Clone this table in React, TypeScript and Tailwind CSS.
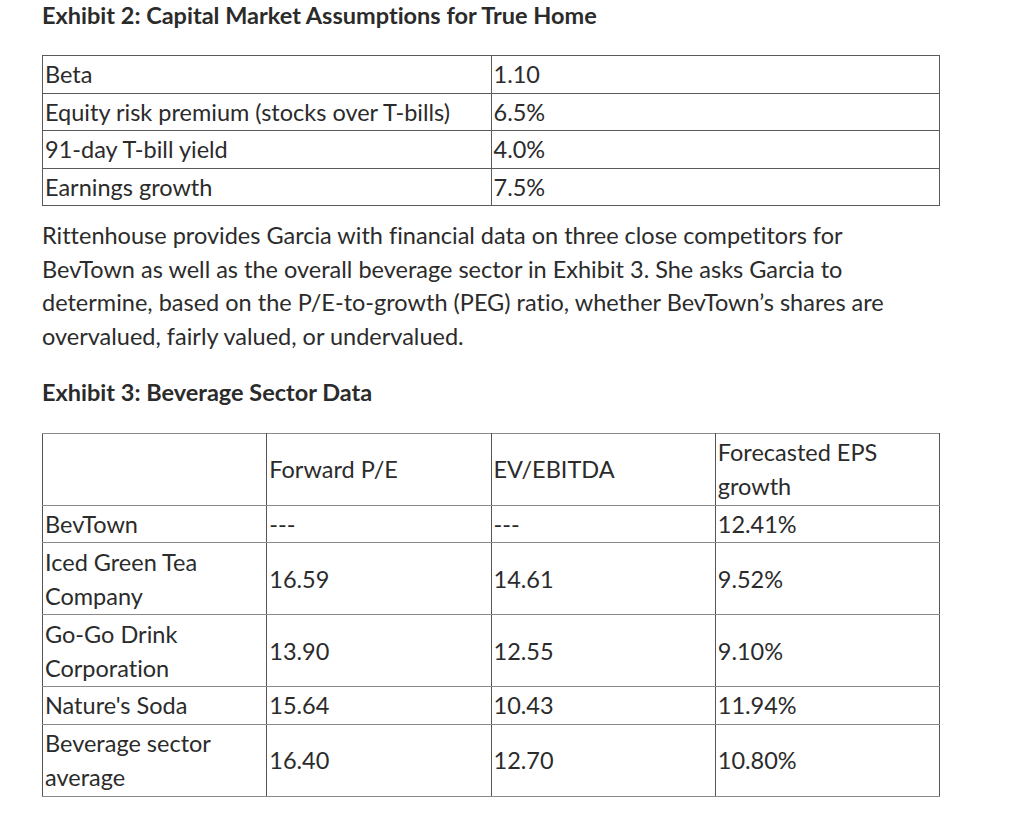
import React from "react";

const assumptions = [
  ["Beta", "1.10"],
  ["Equity risk premium (stocks over T-bills)", "6.5%"],
  ["91-day T-bill yield", "4.0%"],
  ["Earnings growth", "7.5%"],
];

const sector = [
  ["BevTown", "---", "---", "12.41%"],
  ["Iced Green Tea Company", "16.59", "14.61", "9.52%"],
  ["Go-Go Drink Corporation", "13.90", "12.55", "9.10%"],
  ["Nature's Soda", "15.64", "10.43", "11.94%"],
  ["Beverage sector average", "16.40", "12.70", "10.80%"],
];

const cell1 = "border border-[#5a5a5a] px-[2px] py-[1.25px] align-middle text-left font-normal";
const cell2 =
  "border-x border-x-[#555] border-y border-y-[#8a8a8a] px-[2px] py-[1.4px] align-middle text-left font-normal w-1/4";

export default function App() {
  return (
    <div
      className="bg-white min-h-[815px] pl-[42px] text-[#2b2b2b] [font-variant-ligatures:none]"
      style={{ fontFamily: "Lato, 'Open Sans', sans-serif" }}
    >
      <div className="w-[898px]">
        <h2 className="text-[23.5px] font-bold leading-[30px]">
          Exhibit 2: Capital Market Assumptions for True Home
        </h2>

        <table className="mt-[25px] w-full border-collapse text-[23.5px] leading-[34px]">
          <tbody>
            {assumptions.map(([label, value]) => (
              <tr key={label}>
                <td className={cell1 + " w-1/2"}>{label}</td>
                <td className={cell1 + " w-1/2"}>{value}</td>
              </tr>
            ))}
          </tbody>
        </table>

        <p className="mt-[13px] text-[23.5px] leading-[33.7px]">
          Rittenhouse provides Garcia with financial data on three close competitors for
          BevTown as well as the overall beverage sector in Exhibit 3. She asks Garcia to
          determine, based on the P/E-to-growth (PEG) ratio, whether BevTown’s shares are
          overvalued, fairly valued, or undervalued.
        </p>

        <h3 className="mt-[22px] text-[23.5px] font-bold leading-[32px]">
          Exhibit 3: Beverage Sector Data
        </h3>

        <table className="mt-[25px] w-full table-fixed border-collapse text-[23.5px] leading-[34px]">
          <thead>
            <tr>
              <th className={cell2}></th>
              <th className={cell2}>Forward P/E</th>
              <th className={cell2}>EV/EBITDA</th>
              <th className={cell2}>
                Forecasted EPS
                <br />
                growth
              </th>
            </tr>
          </thead>
          <tbody>
            {sector.map((row) => (
              <tr key={row[0]}>
                {row.map((c, i) => (
                  <td key={i} className={cell2}>
                    {c}
                  </td>
                ))}
              </tr>
            ))}
          </tbody>
        </table>
      </div>
    </div>
  );
}
